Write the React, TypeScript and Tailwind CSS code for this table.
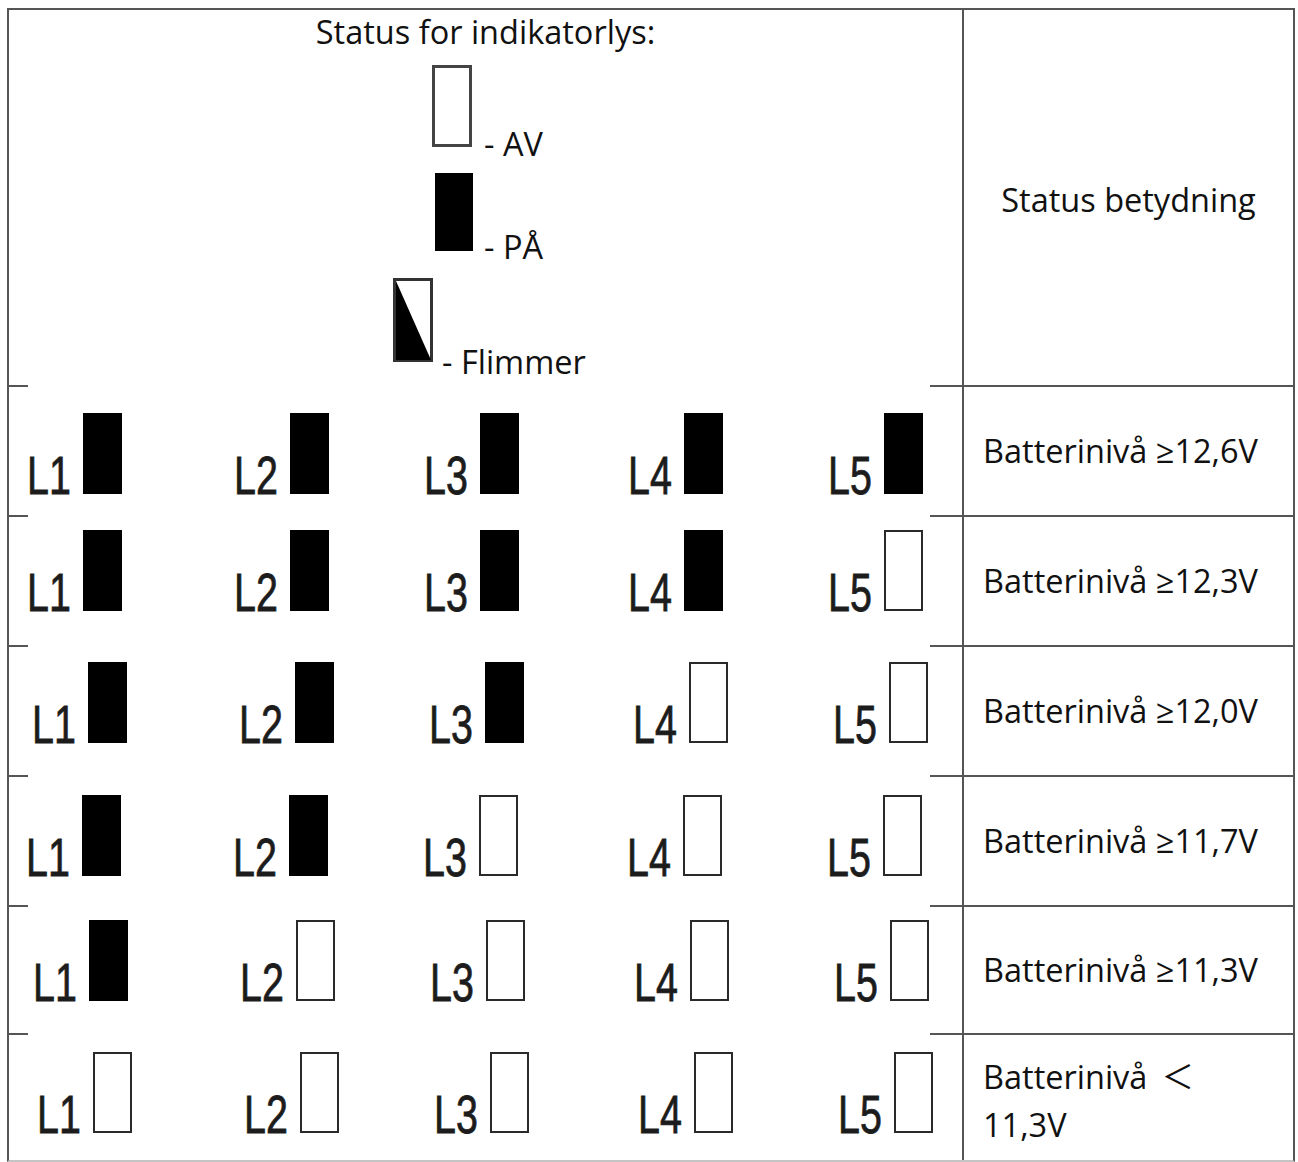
const ROWS = [
  { lights: [1, 1, 1, 1, 1], label: 'Batterinivå ≥12,6V', pt: 'pt-[26px]', pl: 'pl-[18px]', h: 'h-[130px]' },
  { lights: [1, 1, 1, 1, 0], label: 'Batterinivå ≥12,3V', pt: 'pt-[13px]', pl: 'pl-[18px]', h: 'h-[130px]' },
  { lights: [1, 1, 1, 0, 0], label: 'Batterinivå ≥12,0V', pt: 'pt-[15px]', pl: 'pl-[23px]', h: 'h-[130px]' },
  { lights: [1, 1, 0, 0, 0], label: 'Batterinivå ≥11,7V', pt: 'pt-[18px]', pl: 'pl-[17px]', h: 'h-[130px]' },
  { lights: [1, 0, 0, 0, 0], label: 'Batterinivå ≥11,3V', pt: 'pt-[13px]', pl: 'pl-[24px]', h: 'h-[128px]' },
  { lights: [0, 0, 0, 0, 0], label: null, pt: 'pt-[17px]', pl: 'pl-[28px]', h: 'h-[127px]' },
];

function Light({ n, on }: { n: number; on: boolean }) {
  return (
    <div className="flex items-end">
      <div className="h-[37px] w-[56px] leading-[37px]">
        <span className="inline-block origin-left scale-x-[0.73] font-['Liberation_Sans',Arial,sans-serif] text-[54px] leading-[37px] text-[#1c1c1c] [-webkit-text-stroke:0.8px_#1c1c1c]">
          L{n}
        </span>
      </div>
      {on ? (
        <div className="h-[81px] w-[39px] bg-black" />
      ) : (
        <div className="h-[81px] w-[39px] border-2 border-[#2a2a2a] bg-white" />
      )}
    </div>
  );
}

function Ticks() {
  return (
    <div className="flex h-[2px]">
      <div className="w-[19px] bg-[#555]" />
      <div className="flex-1" />
      <div className="w-[32px] bg-[#555]" />
    </div>
  );
}

export default function App() {
  return (
    <div className="h-[1162px] w-[1298px] bg-white pl-[7px] pt-[8px] font-['Open_Sans','Noto_Sans_CJK_SC',sans-serif] text-[#111]">
      <div className="w-[1288px] border-x-2 border-t-2 border-b-2 border-[#555] border-b-[#c4c4c4]">
        {/* header */}
        <div className="flex h-[375px]">
          <div className="flex w-[953px] flex-col items-start pt-[4px]">
            <div className="w-full text-center text-[32.5px] leading-[36px]">Status for indikatorlys:</div>
            <div className="ml-[423px] mt-[15px] flex items-end">
              <div className="h-[82px] w-[40px] border-[3px] border-[#444] bg-white" />
              <span className="ml-[12px] mb-[-13px] text-[32.5px] leading-[32px]">- AV</span>
            </div>
            <div className="ml-[426px] mt-[26px] flex items-end">
              <div className="h-[78px] w-[38px] bg-black" />
              <span className="ml-[11px] mb-[-12px] text-[32.5px] leading-[32px]">- PÅ</span>
            </div>
            <div className="ml-[384px] mt-[27px] flex items-end">
              <svg width="40" height="84" viewBox="0 0 40 84">
                <rect x="1.5" y="1.5" width="37" height="81" fill="white" stroke="#333" strokeWidth="3" />
                <polygon points="3,3 3,82 38,82" fill="black" />
              </svg>
              <span className="ml-[9px] mb-[-16px] text-[32.5px] leading-[32px]">- Flimmer</span>
            </div>
          </div>
          <div className="flex w-[331px] items-center justify-center border-l-2 border-[#555] pt-[6px]">
            <span className="text-[32.5px]">Status betydning</span>
          </div>
        </div>

        {ROWS.map((row, i) => (
          <div key={i} className={`flex ${row.h}`}>
            <div className="flex w-[953px] flex-col">
              <Ticks />
              <div className={`grid grid-cols-[207px_190px_204px_200px_1fr] ${row.pt} ${row.pl}`}>
                {row.lights.map((on, j) => (
                  <Light key={j} n={j + 1} on={on === 1} />
                ))}
              </div>
            </div>
            <div className="flex w-[331px] items-center border-l-2 border-t-2 border-[#555] pl-[19px]">
              {row.label ? (
                <span className="text-[32.5px]">{row.label}</span>
              ) : (
                <span className="pt-[6px] text-[32.5px] leading-[48px]">
                  Batterinivå<span className="ml-[14px]">＜</span>
                  <br />
                  11,3V
                </span>
              )}
            </div>
          </div>
        ))}
      </div>
    </div>
  );
}
